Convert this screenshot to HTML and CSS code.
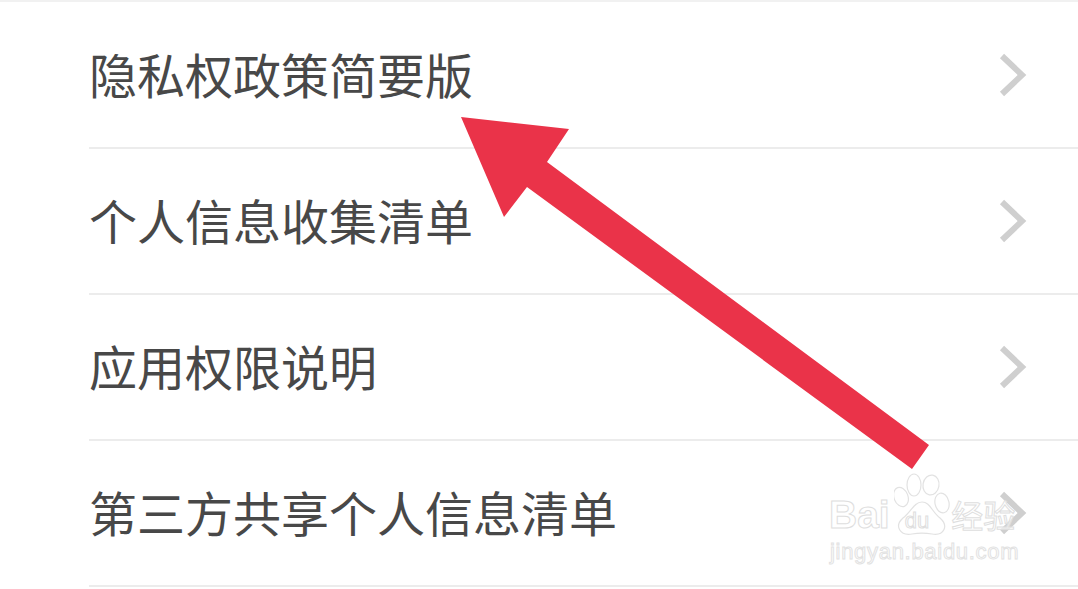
FILE: index.html
```html
<!DOCTYPE html>
<html lang="zh-CN">
<head>
<meta charset="utf-8">
<title>隐私</title>
<link rel="stylesheet" href="styles.css">
</head>
<body>
<div class="screen">
  <ul class="list">
    <li class="row"><span class="label">隐私权政策简要版</span><svg class="chev" viewBox="0 0 30 46"><path d="M4 4 L24 23 L4 42"/></svg></li>
    <li class="row"><span class="label">个人信息收集清单</span><svg class="chev" viewBox="0 0 30 46"><path d="M4 4 L24 23 L4 42"/></svg></li>
    <li class="row"><span class="label">应用权限说明</span><svg class="chev" viewBox="0 0 30 46"><path d="M4 4 L24 23 L4 42"/></svg></li>
    <li class="row"><span class="label">第三方共享个人信息清单</span><svg class="chev" viewBox="0 0 30 46"><path d="M4 4 L24 23 L4 42"/></svg></li>
  </ul>
  <svg class="arrow" viewBox="0 0 1078 589"><polygon points="461,117 569,129 547,162 929,445 912,469 527,187 504,217" fill="#ea3349"/></svg>
  <div class="mark">
    <svg class="paw" viewBox="0 0 60 70">
      <g fill="#fff" fill-opacity=".6" stroke="#e2e2e2" stroke-width="1.2">
        <ellipse cx="7" cy="27" rx="7" ry="10" transform="rotate(-20 7 27)"/>
        <ellipse cx="20" cy="15" rx="7" ry="11"/>
        <ellipse cx="37" cy="15" rx="8" ry="10" transform="rotate(10 37 15)"/>
        <ellipse cx="48" cy="33" rx="7" ry="10" transform="rotate(-12 48 33)"/>
        <path d="M28 32 C36 32 38 42 46 48 C55 56 50 66 38 64 C32 63 24 63 18 64 C6 66 0 56 9 48 C17 42 20 32 28 32 Z"/>
      </g>
    </svg>
    <div class="mark-top"><span class="bai">Bai</span><span class="du">du</span><span class="jy">经验</span></div>
    <div class="mark-url">jingyan.baidu.com</div>
  </div>
</div>
</body>
</html>
```
FILE: styles.css
```css
html, body { margin: 0; padding: 0; background: #fff; }
.screen { position: relative; width: 1078px; height: 589px; overflow: hidden; background: #fff; border-top: 2px solid #f1f1f1; box-sizing: border-box; }
.list { list-style: none; margin: 0; padding: 1px 0 0 89px; }
.row { height: 146px; box-sizing: border-box; border-bottom: 2px solid #ececec; display: flex; align-items: center; justify-content: space-between; padding: 0 50px 2px 0; }
.label { font-family: "Noto Sans CJK SC", sans-serif; font-size: 48px; font-weight: 400; color: #484848; line-height: 60px; margin-bottom: 3px; }
.chev { width: 30px; height: 46px; margin-top: 2px; }
.chev path { fill: none; stroke: #cfcfcf; stroke-width: 6; }
.arrow { position: absolute; left: 0; top: -2px; width: 1078px; height: 589px; }
.mark { position: absolute; left: 828px; top: 468px; width: 200px; height: 100px; }
.paw { position: absolute; left: 66px; top: 0; width: 60px; height: 70px; }
.mark-top { position: absolute; left: 1px; top: 24px; display: flex; align-items: baseline; white-space: nowrap; font-family: "Liberation Sans", sans-serif; line-height: 40px; color: rgba(255,255,255,.65); -webkit-text-stroke: 1px #dedede; }
.bai { font-size: 39px; font-weight: 700; }
.du { font-size: 22px; margin-left: 15px; }
.jy { font-family: "Noto Sans CJK SC", sans-serif; font-size: 32px; margin-left: 22px; }
.mark-url { position: absolute; left: 2px; top: 70px; font-family: "Liberation Sans", sans-serif; font-size: 22px; line-height: 24px; letter-spacing: .7px; white-space: nowrap; color: rgba(255,255,255,.65); -webkit-text-stroke: 1px #e2e2e2; }
```
